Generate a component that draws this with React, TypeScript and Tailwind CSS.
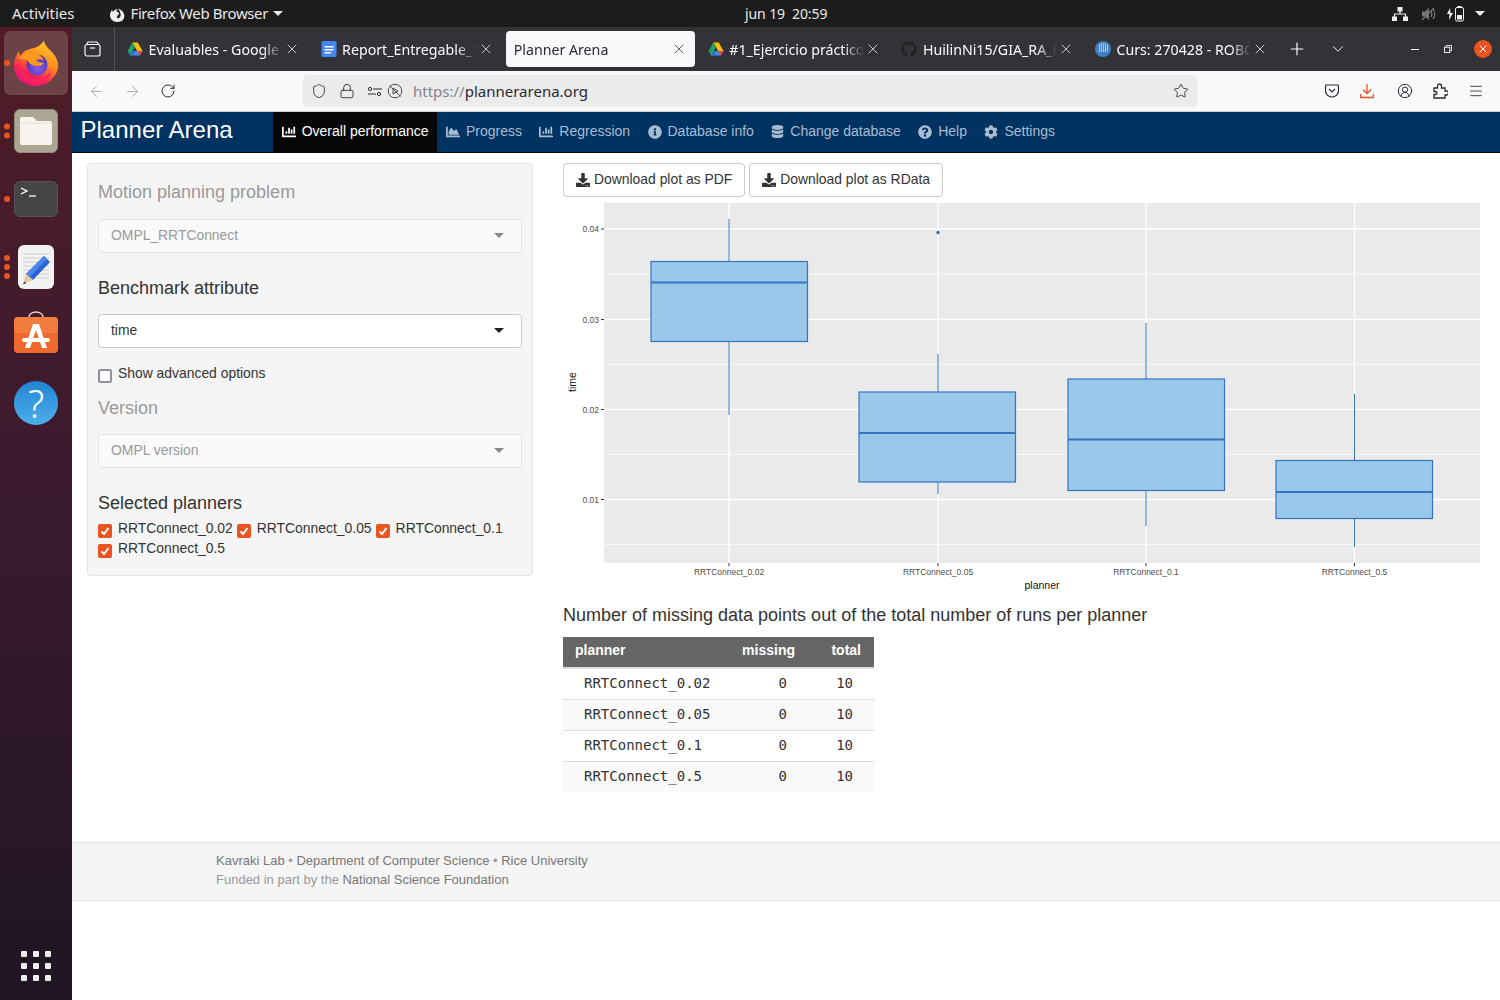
import React from 'react';
import {
  ArrowLeft,
  ArrowRight,
  ChevronDown,
  CircleUserRound,
  Lock,
  Menu,
  Plus,
  RotateCw,
  Shield,
  Star,
  X,
} from 'lucide-react';
import {
  FaChartArea,
  FaChartBar,
  FaCog,
  FaDatabase,
  FaDownload,
  FaGithub,
  FaInfoCircle,
  FaQuestionCircle,
} from 'react-icons/fa';

const DriveIcon = () => (
  <svg width="16" height="16" viewBox="0 0 16 16">
    <path d="M5.3 1.5h5.4L15.500 10h-5.300z" fill="#fbbc04" />
    <path d="M5.300 1.500 .5 10l2.600 4.500L8 6z" fill="#1ea362" />
    <path d="M5.300 10h10.200l-2.600 4.500H3.100z" fill="#4285f4" />
    <path d="M3.100 14.500 5.300 10h3l-2 4.500z" fill="#2f6fd8" />
    <path d="M15.500 10h-5.300l2.700 4.500z" fill="#e8453c" />
  </svg>
);

const DocsIcon = () => (
  <svg width="16" height="16" viewBox="0 0 16 16">
    <rect width="15" height="16" x=".5" rx="1.500" fill="#4285f4" />
    <path d="M3.500 5h9v1.500h-9zM3.500 8h9v1.500h-9zM3.500 11h6.500v1.500H3.500z" fill="#fff" />
  </svg>
);

const UpcIcon = () => (
  <svg width="16" height="16" viewBox="0 0 16 16">
    <circle cx="8" cy="8" r="8" fill="#3f7fbf" />
    <path d="M4.500 3v8M6.500 2.500v8.500M8.500 2.500v8.500M10.500 2.500v8.500M12.500 3.500v7" stroke="#d8e6f3" strokeWidth="1.200" />
    <path d="M3 4h11M3 6h11M3 8h11M3 10h11" stroke="#3f7fbf" strokeWidth=".7" />
  </svg>
);

const FirefoxLogo = () => (
  <svg width="46" height="46" viewBox="0 0 46 46">
    <defs>
      <linearGradient id="ffBody" x1="0.8" y1="0" x2="0.3" y2="1">
        <stop offset="0" stopColor="#ffd02e" />
        <stop offset="0.45" stopColor="#ff8a1e" />
        <stop offset="0.75" stopColor="#f5264f" />
        <stop offset="1" stopColor="#e31587" />
      </linearGradient>
      <radialGradient id="ffGlobe" cx="0.55" cy="0.65" r="0.6">
        <stop offset="0" stopColor="#8f5ce6" />
        <stop offset="1" stopColor="#4b33b8" />
      </radialGradient>
    </defs>
    <path
      d="M31 0c0 4 3 7 7 11 5 5 8 11 7 17-2 10-11 18-22 18C10 46 1 37 1 26c0-6 2-11 5-15 0 2 1 4 2 5 1-4 5-6 9-7 5-1 10-3 12-6 1-1 2-2 2-3z"
      fill="url(#ffBody)"
    />
    <circle cx="24" cy="25" r="10.500" fill="url(#ffGlobe)" />
    <path
      d="M5 18c3-3 7-5 12-5 6 0 11 2 14 7-3-1-6-1-8 0 1 2 4 3 8 3-1 2-4 3-7 3-5 0-9-3-10-7-3 1-6 0-9-1z"
      fill="#ff9a1f"
    />
    <path d="M8 27c2 8 9 13 17 12 6-1 11-4 13-9-1 8-8 14-16 14C14 44 7 36 8 27z" fill="#f9245d" />
  </svg>
);

const FilesIcon = () => (
  <div className="flex h-[44px] w-[44px] items-center justify-center rounded-md border border-[#8f8a78] bg-[#aca793]">
    <svg width="32" height="28" viewBox="0 0 32 28">
      <path d="M2 0h11l4 4h13a2 2 0 0 1 2 2v20a2 2 0 0 1-2 2H2a2 2 0 0 1-2-2V2a2 2 0 0 1 2-2z" fill="#f7f4ef" />
      <path d="M0 6h32" stroke="#e3ded2" strokeWidth="1" />
    </svg>
  </div>
);

const TerminalIcon = () => (
  <div className="flex h-[36px] w-[44px] items-start rounded-md border border-[#555] bg-[#454545] pl-[6px] pt-[5px]">
    <svg width="18" height="12" viewBox="0 0 18 12">
      <path d="M0 1l6 3-6 3" fill="none" stroke="#fff" strokeWidth="1.300" />
      <path d="M8 9h7" stroke="#fff" strokeWidth="1.300" />
    </svg>
  </div>
);

const EditorIcon = () => (
  <div className="h-[44px] w-[36px] rounded-md bg-[#f2f2f2]">
    <svg width="36" height="44" viewBox="0 0 36 44">
      <path
        d="M5 9h26M5 13h26M5 17h26M5 21h26M5 25h26M5 29h26M5 33h26"
        stroke="#cfcfcf"
        strokeWidth="1"
      />
      <path d="M26 11l6 6-17 18-7-6z" fill="#2a62d8" />
      <path d="M26 11l3 3-17 18-4-3z" fill="#4a86ec" />
      <path d="M8 29l7 6-10 4z" fill="#e8c9a0" />
      <path d="M6.500 36.500l2 1.500-3.500 1.500z" fill="#444" />
    </svg>
  </div>
);

const SoftwareIcon = () => (
  <svg width="44" height="42" viewBox="0 0 44 42">
    <path d="M15 8V6a7 5 0 0 1 14 0v2" fill="none" stroke="#eddcc8" strokeWidth="1.400" />
    <rect y="6" width="44" height="36" rx="4" fill="#ee6a2c" />
    <rect y="6" width="44" height="16" rx="4" fill="#f27c3f" />
    <path d="M19 13h6l8 24h-5l-6-18-6 18h-5z" fill="#fff" />
    <rect x="8" y="27" width="28" height="4" rx="2" fill="#fff" />
  </svg>
);

const HelpIcon = () => (
  <div className="flex h-[44px] w-[44px] items-center justify-center rounded-full bg-linear-to-b from-[#1f84d4] to-[#4eb0ea] font-['Noto_Sans',sans-serif] text-[38px] font-light leading-none text-white">
    ?
  </div>
);

const DockItem = ({
  children,
  dots = 0,
  className = '',
}: {
  children: React.ReactNode;
  dots?: number;
  className?: string;
}) => (
  <div className={`relative flex w-full items-center justify-center ${className}`}>
    {children}
    {dots > 0 && (
      <div className="absolute left-[4px] top-1/2 flex -translate-y-1/2 flex-col gap-[3px]">
        {Array.from({ length: dots }).map((_, i) => (
          <span key={i} className="h-[6px] w-[6px] rounded-full bg-[#e95420]" />
        ))}
      </div>
    )}
  </div>
);

const Dock = () => (
  <aside className="flex w-[72px] shrink-0 flex-col items-center bg-linear-to-b from-[#4f1c28] via-[#3a1a2e] to-[#1f1522] pt-[4px]">
    <DockItem dots={1}>
      <div className="flex h-[64px] w-[64px] items-center justify-center rounded-md bg-[#6b4346]">
        <FirefoxLogo />
      </div>
    </DockItem>
    <DockItem dots={2} className="mt-[14px]">
      <FilesIcon />
    </DockItem>
    <DockItem dots={1} className="mt-[28px]">
      <TerminalIcon />
    </DockItem>
    <DockItem dots={3} className="mt-[28px]">
      <EditorIcon />
    </DockItem>
    <DockItem className="mt-[22px]">
      <SoftwareIcon />
    </DockItem>
    <DockItem className="mt-[28px]">
      <HelpIcon />
    </DockItem>
    <div className="mb-[19px] mt-auto grid grid-cols-3 gap-[6px]">
      {Array.from({ length: 9 }).map((_, i) => (
        <span key={i} className="h-[6px] w-[6px] rounded-[1px] bg-[#eeeeec]" />
      ))}
    </div>
  </aside>
);

const TopBar = () => (
  <header className="relative flex h-[27px] shrink-0 items-center bg-[#1c1c1c] font-['Noto_Sans',sans-serif] text-[14px] text-[#e8e8e8]">
    <span className="ml-[12px] text-[15px]">Activities</span>
    <svg className="ml-[34px]" width="16" height="16" viewBox="0 0 16 16">
      <path
        d="M9 0c0 2 1 3 3 4 3 2 4 5 3 8-1 3-4 4-7 4-4 0-7-3-7-7 0-2 1-4 2-5 0 1 1 1 1 2 1-2 3-3 5-3-1 1-2 2-2 3 1-1 3 0 3 2 0 1-2 1-2 3 0 1 1 2 2 1 2-1 2-4 1-6C10 4 9 2 9 0z"
        fill="#eee"
      />
    </svg>
    <span className="ml-[6px] text-[15px] tracking-[-0.4px]">Firefox Web Browser</span>
    <span className="ml-[5px] h-0 w-0 border-x-[5px] border-t-[5px] border-x-transparent border-t-[#e8e8e8]" />
    <span className="absolute left-[745px] tracking-[-0.1px]">jun 19&nbsp;&nbsp;20:59</span>
    <div className="ml-auto mr-[15px] flex items-center">
      <svg width="16" height="16" viewBox="0 0 16 16">
        <path d="M5.500 1h5v4.500h-5zM0 10.500h5V15H0zM11 10.500h5V15h-5z" fill="#eee" />
        <path d="M8 5v3M2.500 11V8h11v3" fill="none" stroke="#eee" strokeWidth="1.200" />
      </svg>
      <svg className="ml-[13px]" width="16" height="16" viewBox="0 0 16 16">
        <path d="M1 5.500h3L8 2v12l-4-3.500H1z" fill="#777" />
        <path d="M10 5c1 2 1 4 0 6M12 3c2 3 2 7 0 10" fill="none" stroke="#777" strokeWidth="1.200" />
        <path d="M1 14 13 2" stroke="#777" strokeWidth="1.200" />
      </svg>
      <svg className="ml-[9px]" width="20" height="16" viewBox="0 0 20 16">
        <path d="M4 2 1 8h2.500L3 14l4-7H4.500z" fill="#eee" />
        <rect x="9.500" y="1.500" width="8" height="13.500" rx="1.500" fill="none" stroke="#eee" />
        <rect x="11.500" y="0" width="4" height="1.500" fill="#eee" />
        <rect x="11" y="9" width="5" height="4.500" fill="#eee" />
      </svg>
      <span className="ml-[9px] h-0 w-0 border-x-[5px] border-t-[5px] border-x-transparent border-t-[#e8e8e8]" />
    </div>
  </header>
);

const tabs = [
  { title: 'Evaluables - Google Drive', icon: <DriveIcon /> },
  { title: 'Report_Entregable_1 - Google Docs', icon: <DocsIcon /> },
  { title: 'Planner Arena', active: true },
  { title: '#1_Ejercicio práctico - Google', icon: <DriveIcon /> },
  { title: 'HuilinNi15/GIA_RA_Final', icon: <FaGithub size={16} className="text-[#232323]" /> },
  { title: 'Curs: 270428 - ROBÒTICA', icon: <UpcIcon /> },
];

const Tab = ({ title, icon, active }: { title: string; icon?: React.ReactNode; active?: boolean }) => (
  <div
    className={`flex h-[36px] w-[189.600px] shrink-0 items-center rounded-[4px] pl-[8px] pr-[8px] ${
      active ? 'bg-[#f9f9fb] text-[#2b2a33]' : 'text-[#fbfbfe]'
    }`}
  >
    {icon && <span className="mr-[5px] flex w-[17px] shrink-0 items-center justify-center">{icon}</span>}
    <span className="min-w-0 flex-1 overflow-hidden whitespace-nowrap pt-[1px] [mask-image:linear-gradient(to_right,black_85%,transparent)]">
      {title}
    </span>
    <X size={16} strokeWidth={1.100} className="ml-[1px] shrink-0" />
  </div>
);

const TabStrip = () => (
  <div className="flex h-[44px] shrink-0 items-center bg-[#333236] font-['Noto_Sans',sans-serif] text-[14.200px] text-[#fbfbfe]">
    <div className="flex h-full w-[43px] shrink-0 items-center justify-center border-r border-[#55545a] pr-[2px]">
      <svg width="17" height="16" viewBox="0 0 17 16" fill="none" stroke="#fbfbfe" strokeWidth="1.200">
        <path d="M2.500 3.500 4 1h9l1.500 2.500" />
        <rect x="1" y="3.500" width="15" height="11.500" rx="2" />
        <path d="M6 7h5" />
      </svg>
    </div>
    <div className="ml-[3.500px] flex gap-[4px]">
      {tabs.map((t) => (
        <Tab key={t.title} {...t} />
      ))}
    </div>
    <Plus size={20} strokeWidth={1.400} className="ml-[11px] shrink-0" />
    <ChevronDown size={18} strokeWidth={1.300} className="ml-[22px] shrink-0" />
    <div className="ml-auto mr-[8px] flex items-center">
      <span className="mr-[-1px] h-px w-[8px] bg-[#fbfbfe]" />
      <svg className="ml-[26px]" width="8" height="8" viewBox="0 0 9 9" fill="none" stroke="#fbfbfe">
        <rect x=".5" y="2.500" width="6" height="6" />
        <path d="M2.500 2.500v-2h6v6h-2" />
      </svg>
      <span className="ml-[22px] flex h-[18px] w-[18px] items-center justify-center rounded-full bg-[#e95420] text-white">
        <X size={12} strokeWidth={2} />
      </span>
    </div>
  </div>
);

const NavToolbar = () => (
  <div className="flex h-[41px] shrink-0 items-center border-b border-[#cfcfd8] bg-[#f9f9fb] font-['Noto_Sans',sans-serif] text-[#2b2a33]">
    <ArrowLeft size={17} strokeWidth={1.300} className="ml-[16px] text-[#a8a8ad]" />
    <ArrowRight size={17} strokeWidth={1.300} className="ml-[19px] text-[#a8a8ad]" />
    <RotateCw size={16} strokeWidth={1.500} className="ml-[19px]" />
    <div className="ml-[127px] flex h-[32px] w-[894px] items-center rounded-[4px] bg-[#ebebeb] pl-[8px] pr-[8px]">
      <Shield size={16} strokeWidth={1.300} />
      <Lock size={16} strokeWidth={1.300} className="ml-[12px]" />
      <svg className="ml-[12px]" width="16" height="16" viewBox="0 0 16 16" fill="none" stroke="#2b2a33" strokeWidth="1">
        <path d="M6 6h9M1 11h8" />
        <circle cx="3" cy="6" r="1.600" />
        <circle cx="12" cy="11" r="1.600" />
      </svg>
      <svg className="ml-[4px]" width="16" height="16" viewBox="0 0 16 16" fill="none" stroke="#4a4a50" strokeWidth="1">
        <circle cx="8" cy="8" r="6.800" />
        <path d="M2.500 2.500l11 11M6 5l5 3-5 3z" />
      </svg>
      <span className="ml-[10px] text-[15px]">
        <span className="text-[#85858a]">https://</span>plannerarena.org
      </span>
      <Star size={16} strokeWidth={1.300} className="ml-auto" />
    </div>
    <svg className="ml-[128px]" width="14" height="14" viewBox="0 0 14 14" fill="none" stroke="#2b2a33" strokeWidth="1.200">
      <path d="M1.500 1h11a1 1 0 0 1 1 1v4.500a6.500 6.500 0 0 1-13 0V2a1 1 0 0 1 .5-1z" />
      <path d="M4 5l3 3 3-3" />
    </svg>
    <svg className="ml-[21px]" width="14" height="16" viewBox="0 0 14 16" fill="none" stroke="#e95420" strokeWidth="1.300">
      <path d="M7 1v9M3 6.500 7 10.500l4-4M.7 11v3.500h12.600V11" />
    </svg>
    <CircleUserRound size={16} strokeWidth={1.500} className="ml-[23px]" />
    <svg className="ml-[20px]" width="15" height="16" viewBox="0 0 15 16" fill="none" stroke="#2b2a33" strokeWidth="1.300">
      <path d="M1 5h3.500V3a2 2 0 0 1 4 0v2H12v3h1.500a2 2 0 0 1 0 4H12v3H1v-3.500h1.500a1.500 1.500 0 0 0 0-3H1z" />
    </svg>
    <Menu size={16} strokeWidth={1.300} className="ml-[20px]" />
  </div>
);

const navItems = [
  { label: 'Overall performance', icon: <FaChartBar size={14} />, active: true },
  { label: 'Progress', icon: <FaChartArea size={14} /> },
  { label: 'Regression', icon: <FaChartBar size={14} /> },
  { label: 'Database info', icon: <FaInfoCircle size={14} /> },
  { label: 'Change database', icon: <FaDatabase size={13} /> },
  { label: 'Help', icon: <FaQuestionCircle size={14} /> },
  { label: 'Settings', icon: <FaCog size={14} /> },
];

const NavBar = () => (
  <nav className="flex h-[41px] shrink-0 items-center border-b border-[#0a0a0a] bg-[#003262] text-[14px] text-[#a9bdd2]">
    <span className="mb-[5px] ml-[8.500px] w-[192.500px] text-[24px] leading-none text-white">Planner Arena</span>
    {navItems.map((n) => (
      <a
        key={n.label}
        className={`flex h-full items-center gap-[6px] px-[8.700px] pb-[1px] ${n.active ? 'bg-[#080808] text-white' : ''}`}
      >
        {n.icon}
        {n.label}
      </a>
    ))}
  </nav>
);

const SelectBox = ({ value, disabled }: { value: string; disabled?: boolean }) => (
  <div
    className={`flex h-[34px] items-center rounded-[4px] border pb-[2px] pl-[12px] pr-[17px] text-[13.900px] ${
      disabled ? 'border-[#e3e3e3] bg-[#fafafa] text-[#999]' : 'border-[#ccc] bg-white text-[#333]'
    }`}
  >
    {value}
    <span
      className={`ml-auto h-0 w-0 border-x-[5px] border-t-[5px] border-x-transparent ${
        disabled ? 'border-t-[#888]' : 'border-t-[#222]'
      }`}
    />
  </div>
);

const CheckBox = () => (
  <span className="mt-[6px] flex h-[14px] w-[14px] shrink-0 items-center justify-center rounded-[2px] bg-[#e95420]">
    <svg width="10" height="10" viewBox="0 0 10 10" fill="none" stroke="#fff" strokeWidth="2">
      <path d="M1.500 5.500 4 8l4.500-6" />
    </svg>
  </span>
);

const planners = ['RRTConnect_0.02', 'RRTConnect_0.05', 'RRTConnect_0.1', 'RRTConnect_0.5'];

const Sidebar = () => (
  <div className="h-[413px] w-[446px] shrink-0 rounded-[4px] border border-[#e3e3e3] bg-[#f5f5f5] px-[10px] text-[#333]">
    <div className="mt-[18px] text-[18px] leading-[20px] text-[#999]">Motion planning problem</div>
    <div className="mt-[17px]">
      <SelectBox value="OMPL_RRTConnect" disabled />
    </div>
    <div className="mt-[25px] text-[18px] leading-[20px]">Benchmark attribute</div>
    <div className="mt-[16px]">
      <SelectBox value="time" />
    </div>
    <div className="mt-[15px] flex text-[13.900px] leading-[20px]">
      <span className="mt-[6px] h-[14px] w-[14px] rounded-[2px] border-2 border-[#8f8f9d] bg-white" />
      <span className="ml-[6px]">Show advanced options</span>
    </div>
    <div className="mt-[15px] text-[18px] leading-[20px] text-[#999]">Version</div>
    <div className="mt-[16px]">
      <SelectBox value="OMPL version" disabled />
    </div>
    <div className="mt-[25px] text-[18px] leading-[20px]">Selected planners</div>
    <div className="mt-[5px] flex flex-wrap gap-x-[4px] text-[13.900px] leading-[20px]">
      {planners.map((p) => (
        <span key={p} className="flex items-start gap-[6px]">
          <CheckBox />
          {p}
        </span>
      ))}
    </div>
  </div>
);

// plot geometry is in page pixels minus the svg origin (563, 203)
const boxes = [
  { x: 88, top: 58.500, bot: 138.500, med: 79.500, wTop: 16, wBot: 212 },
  { x: 296, top: 189, bot: 279, med: 230, wTop: 151, wBot: 291 },
  { x: 505, top: 176, bot: 287.500, med: 236.500, wTop: 120, wBot: 323 },
  { x: 713, top: 257.500, bot: 315.500, med: 289, wTop: 191, wBot: 344 },
];
const majorY = [
  { y: 26, label: '0.04' },
  { y: 116.500, label: '0.03' },
  { y: 206.500, label: '0.02' },
  { y: 296.500, label: '0.01' },
];
const minorY = [71, 161.500, 251.500, 341.500];
const xTicks = [166, 375, 583, 791.500];

const BoxPlot = () => (
  <svg width="920" height="392" viewBox="0 0 920 392" className="mt-[6px] block font-['Liberation_Sans',sans-serif]">
    <rect x="41" y="0" width="876" height="360" fill="#eaeaea" />
    {minorY.map((y) => (
      <line key={y} x1="41" x2="917" y1={y} y2={y} stroke="#fff" strokeWidth=".7" />
    ))}
    {majorY.map((m) => (
      <g key={m.y}>
        <line x1="41" x2="917" y1={m.y} y2={m.y} stroke="#fff" strokeWidth="1.300" />
        <line x1="38" x2="41" y1={m.y} y2={m.y} stroke="#333" strokeWidth="1" />
        <text x="36" y={m.y + 3} textAnchor="end" fontSize="8.500" fill="#4d4d4d">
          {m.label}
        </text>
      </g>
    ))}
    {xTicks.map((x, i) => (
      <g key={x}>
        <line x1={x} x2={x} y1="0" y2="360" stroke="#fff" strokeWidth="1.300" />
        <line x1={x} x2={x} y1="360" y2="363" stroke="#333" strokeWidth="1" />
        <text x={x} y="372" textAnchor="middle" fontSize="8.500" fill="#4d4d4d">
          {planners[i]}
        </text>
      </g>
    ))}
    {boxes.map((b, i) => {
      const cx = xTicks[i];
      return (
        <g key={b.x} stroke="#3575c0">
          <line x1={cx} x2={cx} y1={b.wTop} y2={b.top} strokeWidth="1" />
          <line x1={cx} x2={cx} y1={b.bot} y2={b.wBot} strokeWidth="1" />
          <rect x={b.x} y={b.top} width="156.500" height={b.bot - b.top} fill="#99c8ea" strokeWidth="1.200" />
          <line x1={b.x} x2={b.x + 156.500} y1={b.med} y2={b.med} strokeWidth="2.200" />
        </g>
      );
    })}
    <circle cx="375" cy="29.500" r="1.700" fill="#2f6fc0" />
    <text x="479" y="386" textAnchor="middle" fontSize="10.500" fill="#111">
      planner
    </text>
    <text transform="translate(13 179) rotate(-90)" textAnchor="middle" fontSize="10.500" fill="#111">
      time
    </text>
  </svg>
);

const MissingTable = () => (
  <table className="mt-[12px] w-[311px] table-fixed border-collapse text-[14px] text-[#333]">
    <colgroup>
      <col className="w-[167px]" />
      <col className="w-[77px]" />
      <col className="w-[67px]" />
    </colgroup>
    <thead>
      <tr className="h-[31px] border-b-2 border-[#ddd] bg-[#666] text-left font-bold text-white">
        <th className="pb-[4px] pl-[12px]">planner</th>
        <th className="pb-[4px] pr-[12px] text-right">missing</th>
        <th className="pb-[4px] pr-[13px] text-right">total</th>
      </tr>
    </thead>
    <tbody className="font-['DejaVu_Sans_Mono',monospace]">
      {planners.map((p, i) => (
        <tr key={p} className={`h-[31px] ${i < 3 ? 'border-b border-[#ddd]' : ''} ${i % 2 ? 'bg-[#f9f9f9]' : ''}`}>
          <td className="pl-[21px]">{p}</td>
          <td className="pr-[20px] text-right">0</td>
          <td className="pr-[21px] text-right">10</td>
        </tr>
      ))}
    </tbody>
  </table>
);

const DownloadButton = ({ label }: { label: string }) => (
  <button className="flex h-[34px] items-center gap-[4px] rounded-[4px] border border-[#ccc] bg-white px-[12px] pb-[1px] text-[13.900px] text-[#333]">
    <FaDownload size={14} />
    {label}
  </button>
);

const Footer = () => (
  <footer className="mt-[50px] h-[59px] border-y border-[#e3e3e3] bg-[#f5f5f5] pl-[144px] pt-[8px] text-[13px] leading-[19px] text-[#999]">
    <div>
      <span className="text-[#777]">Kavraki Lab</span> • <span className="text-[#777]">Department of Computer Science</span> •{' '}
      <span className="text-[#777]">Rice University</span>
    </div>
    <div>
      Funded in part by the <span className="text-[#777]">National Science Foundation</span>
    </div>
  </footer>
);

export default function App() {
  return (
    <div className="flex h-[1000px] w-[1500px] flex-col overflow-hidden bg-white font-['Liberation_Sans',sans-serif]">
      <TopBar />
      <div className="flex min-h-0 flex-1">
        <Dock />
        <div className="flex min-w-0 flex-1 flex-col">
          <TabStrip />
          <NavToolbar />
          <NavBar />
          <main className="flex pl-[15px] pt-[10px]">
            <Sidebar />
            <div className="ml-[30px]">
              <div className="flex gap-[4px]">
                <DownloadButton label="Download plot as PDF" />
                <DownloadButton label="Download plot as RData" />
              </div>
              <BoxPlot />
              <div className="mt-[10px] text-[18px] leading-[20px] text-[#333]">
                Number of missing data points out of the total number of runs per planner
              </div>
              <MissingTable />
            </div>
          </main>
          <Footer />
        </div>
      </div>
    </div>
  );
}
